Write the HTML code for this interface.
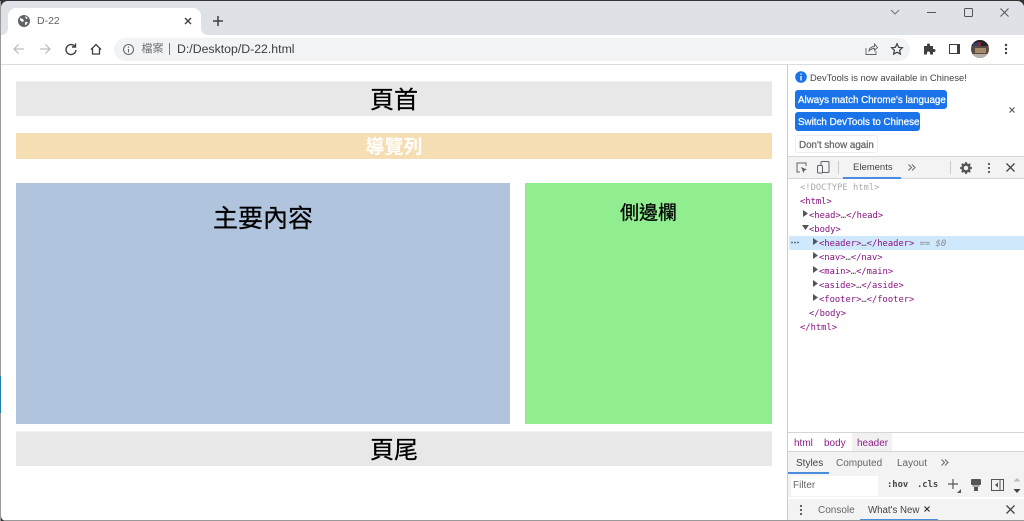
<!DOCTYPE html>
<html><head><meta charset="utf-8"><style>
html,body{margin:0;padding:0;background:#fff;overflow:hidden}
#r{position:relative;width:1024px;height:521px;overflow:hidden;background:#333;font-family:"Liberation Sans","Noto Sans CJK TC",sans-serif}
.a{position:absolute}
.t{position:absolute;white-space:nowrap}
.c{position:absolute;text-align:center;font-family:"Noto Sans CJK TC","WenQuanYi Zen Hei",sans-serif;white-space:nowrap;-webkit-text-stroke:.25px currentColor}
.m{position:absolute;white-space:nowrap;font-family:"DejaVu Sans Mono","Liberation Mono",monospace;font-size:8.8px;line-height:14px;color:#881280}
.b{-webkit-text-stroke:.25px currentColor}
svg{position:absolute;overflow:visible}
</style></head><body><div id="r">
<div class="a" style="left:1px;top:1px;width:1023px;height:520px;background:#fff;border-radius:7px 7px 0 5px"></div>
<div class="a" style="left:1px;top:1px;width:1023px;height:34px;background:#dee1e6;border-radius:7px 7px 0 0"></div>
<div class="a" style="left:8px;top:8px;width:193px;height:27px;background:#fff;border-radius:8px 8px 0 0"></div>
<svg style="left:1px;top:28px" width="7" height="7"><path d="M0 7h7V0C7 4 4 7 0 7z" fill="#fff"/></svg>
<svg style="left:201px;top:28px" width="7" height="7"><path d="M0 0v7h7C3 7 0 4 0 0z" fill="#fff"/></svg>
<svg style="left:18px;top:15px" width="12" height="12" viewBox="0 0 12 12"><circle cx="6" cy="6" r="6" fill="#5f6368"/><path d="M2 3l3 1 1 2-2 1-2-2zM7 1l3 2-2 1zM7 7l3 0-2 3-1 0z" fill="#fff"/></svg>
<div class="t" style="left:37px;top:15px;font-size:10.5px;line-height:13px;color:#5f6368">D-22</div>
<svg style="left:184px;top:17px" width="8" height="8"><path d="M1 1l6 6M7 1l-6 6" stroke="#3c4043" stroke-width="1.4" fill="none"/></svg>
<svg style="left:213px;top:16px" width="10" height="10"><path d="M5 0v10M0 5h10" stroke="#3c4043" stroke-width="1.5" fill="none"/></svg>
<svg style="left:890px;top:9px" width="10" height="6"><path d="M1 1l4 4 4-4" stroke="#70757a" fill="none"/></svg>
<div class="a" style="left:927px;top:12px;width:9px;height:1px;background:#555"></div>
<div class="a" style="left:964px;top:8px;width:7px;height:7px;border:1px solid #555;border-radius:1.5px"></div>
<svg style="left:1000px;top:8px" width="9" height="9"><path d="M.5.5l8 8M8.500.5l-8 8" stroke="#555" fill="none"/></svg>

<div class="a" style="left:1px;top:35px;width:1023px;height:29px;background:#fff;border-bottom:1px solid #dadce0"></div>
<svg style="left:13px;top:43px" width="12" height="12"><path d="M11 6H1M5.500 1.500L1 6l4.500 4.500" stroke="#bcc0c4" stroke-width="1.300" fill="none"/></svg>
<svg style="left:39px;top:43px" width="12" height="12"><path d="M1 6h10M6.500 1.500L11 6l-4.500 4.500" stroke="#bcc0c4" stroke-width="1.300" fill="none"/></svg>
<svg style="left:65px;top:43px" width="12" height="12"><path d="M10 3.500A5 5 0 1 0 11 7M10.500 .5v3.500H7" stroke="#3c4043" stroke-width="1.400" fill="none"/></svg>
<svg style="left:90px;top:43px" width="12" height="12"><path d="M1 6.500L6 1.500l5 5M2.500 5.500V11h7V5.500" stroke="#3c4043" stroke-width="1.300" fill="none"/></svg>
<div class="a" style="left:114px;top:38px;width:796px;height:23px;background:#f1f3f4;border-radius:12px"></div>
<svg style="left:123px;top:44px" width="11" height="11"><circle cx="5.500" cy="5.500" r="5" stroke="#5f6368" fill="none"/><path d="M5.500 2.500v1.200M5.500 5v3.500" stroke="#5f6368"/></svg>
<div class="t" style="left:141.500px;top:42px;font-size:11px;line-height:14px;color:#6c7074">檔案</div>
<div class="a" style="left:169px;top:43px;width:1px;height:12px;background:#777"></div>
<div class="t" style="left:177px;top:42px;font-size:12.300px;line-height:15px;color:#3c4043">D:/Desktop/D-22.html</div>
<svg style="left:865px;top:43px" width="13" height="12"><path d="M1 5v6.500h10V8M4 8c0-3 3-4.500 5.500-4.500V1l3 3.500-3 3V5.500C7 5.500 5.500 6 4 8z" stroke="#5f6368" fill="none" stroke-width=".9"/></svg>
<svg style="left:891px;top:43px" width="12" height="12"><path d="M6 .8l1.600 3.500 3.800.4-2.800 2.600.8 3.800L6 9.200l-3.400 1.900.8-3.800L.6 4.700l3.800-.4z" stroke="#3c4043" stroke-width="1.200" fill="none"/></svg>
<svg style="left:923px;top:43px" width="12" height="12"><path d="M1 3h3V2a1.500 1.500 0 0 1 3 0v1h3v3h1a1.500 1.500 0 0 1 0 3h-1v2.500H7V10a1.500 1.500 0 0 0-3 0v1.500H1z" fill="#3c4043"/></svg>
<div class="a" style="left:949px;top:44px;width:7px;height:8px;border:1px solid #3c4043;border-right:3px solid #3c4043"></div>
<div class="a" style="left:971px;top:40px;width:18px;height:18px;border-radius:50%;overflow:hidden;background:#5a4a42"><div class="a" style="left:0;top:0;width:18px;height:6px;background:#26222c"></div><div class="a" style="left:2px;top:3px;width:4px;height:3px;background:#2e4470"></div><div class="a" style="left:6px;top:2px;width:4px;height:4px;background:#7a2c38"></div><div class="a" style="left:4px;top:8px;width:11px;height:5px;background:#a58a6c"></div><div class="a" style="left:0;top:14px;width:18px;height:4px;background:#b8b0a8"></div></div>
<svg style="left:1004px;top:43px" width="4" height="12"><circle cx="2" cy="2" r="1.200" fill="#3c4043"/><circle cx="2" cy="6" r="1.200" fill="#3c4043"/><circle cx="2" cy="10" r="1.200" fill="#3c4043"/></svg>

<div class="a" style="left:16px;top:81px;width:756px;height:35px;background:#e8e8e8;border-top:1px solid #f1f1f1;box-sizing:border-box"></div>
<div class="c" style="left:16px;top:81px;width:756px;font-size:24px;line-height:34px;color:#000">頁首</div>
<div class="a" style="left:16px;top:133px;width:756px;height:26px;background:#f5deb3"></div>
<div class="c" style="left:16px;top:133px;width:756px;font-size:19px;font-weight:700;line-height:26px;color:#fff;-webkit-text-stroke:0">導覽列</div>
<div class="a" style="left:16px;top:183px;width:494px;height:241px;background:#b0c4de"></div>
<div class="c" style="left:16px;top:199px;width:494px;font-size:25px;line-height:36px;color:#000">主要內容</div>
<div class="a" style="left:525px;top:183px;width:247px;height:241px;background:#90ee90"></div>
<div class="c" style="left:525px;top:198px;width:247px;font-size:19px;line-height:28px;color:#000">側邊欄</div>
<div class="a" style="left:16px;top:431px;width:756px;height:35px;background:#e8e8e8;border-top:1px solid #f1f1f1;box-sizing:border-box"></div>
<div class="c" style="left:16px;top:431px;width:756px;font-size:24px;line-height:34px;color:#000">頁尾</div>

<div class="a" style="left:787px;top:65px;width:1px;height:456px;background:#cbcdd1"></div>
<svg style="left:795px;top:71px" width="12" height="12"><circle cx="6" cy="6" r="5.800" fill="#1a73e8"/><path d="M6 2.500v1.300M6 5v4.500" stroke="#fff" stroke-width="1.300"/></svg>
<div class="t" style="left:810px;top:71px;font-size:9.400px;line-height:13px;color:#444">DevTools is now available in Chinese!</div>
<div class="a" style="left:795px;top:90px;width:152px;height:19px;background:#1a73e8;border-radius:3px"></div>
<div class="t b" style="left:798px;top:94px;font-size:9.800px;line-height:13px;color:#fff">Always match Chrome's language</div>
<div class="a" style="left:795px;top:112px;width:125px;height:19px;background:#1a73e8;border-radius:3px"></div>
<div class="t b" style="left:798px;top:116px;font-size:9.800px;line-height:13px;color:#fff">Switch DevTools to Chinese</div>
<div class="a" style="left:795px;top:135px;width:81px;height:16px;border:1px solid #eee;border-radius:3px"></div>
<div class="t b" style="left:799px;top:139px;font-size:9.800px;line-height:13px;color:#666">Don't show again</div>
<svg style="left:1009px;top:107px" width="6" height="6"><path d="M.5.500l5 5M5.500.500l-5 5" stroke="#555" stroke-width="1.100" fill="none"/></svg>

<div class="a" style="left:788px;top:156px;width:236px;height:23px;background:#f3f3f3;border-top:1px solid #d5d5d5;border-bottom:1px solid #d5d5d5;box-sizing:border-box"></div>
<svg style="left:796px;top:162px" width="12" height="12"><path d="M4 10H1V1h9v3" stroke="#5f6368" fill="none"/><path d="M5 5l6 2.500-2.500 1L7.500 11z" fill="#5f6368"/></svg>
<svg style="left:817px;top:161px" width="13" height="13"><rect x="4" y=".5" width="8" height="11" rx="1" stroke="#5f6368" fill="none"/><rect x=".5" y="4.500" width="5" height="7.500" rx="1" stroke="#5f6368" fill="#f3f3f3"/></svg>
<div class="a" style="left:838px;top:161px;width:1px;height:13px;background:#ccc"></div>
<div class="t" style="left:853px;top:161px;font-size:9.500px;line-height:13px;color:#444">Elements</div>
<div class="a" style="left:843px;top:177px;width:58px;height:2px;background:#4a8ce0"></div>
<svg style="left:908px;top:164px" width="8" height="7"><path d="M.5.500l3 3-3 3M4 .500l3 3-3 3" stroke="#666" fill="none"/></svg>
<div class="a" style="left:950px;top:161px;width:1px;height:13px;background:#ccc"></div>
<svg style="left:960px;top:162px" width="12" height="12"><circle cx="6" cy="6" r="3.500" stroke="#555" stroke-width="2.500" fill="none"/><path d="M6 0v2M6 10v2M0 6h2M10 6h2M1.800 1.800l1.400 1.400M8.800 8.800l1.400 1.400M10.200 1.800L8.800 3.200M3.200 8.800l-1.400 1.400" stroke="#555" stroke-width="1.800"/></svg>
<svg style="left:987px;top:162px" width="4" height="12"><circle cx="2" cy="2" r="1.100" fill="#555"/><circle cx="2" cy="6" r="1.100" fill="#555"/><circle cx="2" cy="10" r="1.100" fill="#555"/></svg>
<svg style="left:1006px;top:163px" width="9" height="9"><path d="M.5.500l8 8M8.500.500l-8 8" stroke="#444" stroke-width="1.300" fill="none"/></svg>

<div class="a" style="left:789px;top:236px;width:235px;height:14px;background:#cfe8fc"></div>
<div class="m" style="left:800px;top:181px;color:#aaa">&lt;!DOCTYPE html&gt;</div>
<div class="m" style="left:800px;top:195px">&lt;html&gt;</div>
<div class="m" style="left:809px;top:209px">&lt;head&gt;<span style="color:#555">…</span>&lt;/head&gt;</div>
<div class="m" style="left:809px;top:223px">&lt;body&gt;</div>
<div class="m" style="left:819px;top:237px">&lt;header&gt;<span style="color:#555">…</span>&lt;/header&gt; <span style="color:#888;font-style:italic">== $0</span></div>
<div class="m" style="left:819px;top:251px">&lt;nav&gt;<span style="color:#555">…</span>&lt;/nav&gt;</div>
<div class="m" style="left:819px;top:265px">&lt;main&gt;<span style="color:#555">…</span>&lt;/main&gt;</div>
<div class="m" style="left:819px;top:279px">&lt;aside&gt;<span style="color:#555">…</span>&lt;/aside&gt;</div>
<div class="m" style="left:819px;top:293px">&lt;footer&gt;<span style="color:#555">…</span>&lt;/footer&gt;</div>
<div class="m" style="left:809px;top:307px">&lt;/body&gt;</div>
<div class="m" style="left:800px;top:321px">&lt;/html&gt;</div>
<svg style="left:803px;top:210px" width="5" height="7"><path d="M0 0l5 3.500L0 7z" fill="#555"/></svg>
<svg style="left:802px;top:225px" width="7" height="5"><path d="M0 0h7L3.500 5z" fill="#555"/></svg>
<svg style="left:813px;top:238px" width="5" height="7"><path d="M0 0l5 3.500L0 7z" fill="#555"/></svg>
<svg style="left:813px;top:252px" width="5" height="7"><path d="M0 0l5 3.500L0 7z" fill="#555"/></svg>
<svg style="left:813px;top:266px" width="5" height="7"><path d="M0 0l5 3.500L0 7z" fill="#555"/></svg>
<svg style="left:813px;top:280px" width="5" height="7"><path d="M0 0l5 3.500L0 7z" fill="#555"/></svg>
<svg style="left:813px;top:294px" width="5" height="7"><path d="M0 0l5 3.500L0 7z" fill="#555"/></svg>
<svg style="left:791px;top:241px" width="9" height="3"><circle cx="1" cy="1.500" r=".9" fill="#555"/><circle cx="4" cy="1.500" r=".9" fill="#555"/><circle cx="7" cy="1.500" r=".9" fill="#555"/></svg>

<div class="a" style="left:788px;top:432px;width:236px;height:1px;background:#d5d5d5"></div>
<div class="a" style="left:852px;top:433px;width:40px;height:18px;background:#f1f1f1"></div>
<div class="t" style="left:794px;top:437px;font-size:10px;line-height:13px;color:#92208c">html</div>
<div class="t" style="left:824px;top:437px;font-size:10px;line-height:13px;color:#92208c">body</div>
<div class="t" style="left:857px;top:437px;font-size:10px;line-height:13px;color:#92208c">header</div>
<div class="a" style="left:788px;top:451px;width:236px;height:70px;background:#f3f3f3;border-top:1px solid #d5d5d5;box-sizing:border-box"></div>
<div class="t" style="left:796px;top:457px;font-size:10px;line-height:13px;color:#444">Styles</div>
<div class="t" style="left:836px;top:457px;font-size:10px;line-height:13px;color:#666">Computed</div>
<div class="t" style="left:897px;top:457px;font-size:10px;line-height:13px;color:#666">Layout</div>
<svg style="left:941px;top:459px" width="8" height="7"><path d="M.5.500l3 3-3 3M4 .500l3 3-3 3" stroke="#666" fill="none"/></svg>
<div class="a" style="left:788px;top:472px;width:41px;height:2px;background:#4a8ce0"></div>
<div class="a" style="left:791px;top:476px;width:87px;height:20px;background:#fff"></div>
<div class="a" style="left:788px;top:497px;width:236px;height:2px;background:#fff"></div>
<div class="t" style="left:793px;top:479px;font-size:10px;line-height:13px;color:#666">Filter</div>
<div class="t" style="left:887px;top:479px;font-family:'DejaVu Sans Mono',monospace;font-size:8.800px;font-weight:700;line-height:13px;color:#444">:hov</div>
<div class="t" style="left:917px;top:479px;font-family:'DejaVu Sans Mono',monospace;font-size:8.800px;font-weight:700;line-height:13px;color:#444">.cls</div>
<svg style="left:948px;top:479px" width="14" height="14"><path d="M5 0v10M0 5h10" stroke="#555" stroke-width="1.200"/><path d="M13 10v4h-4z" fill="#555"/></svg>
<svg style="left:970px;top:479px" width="12" height="12"><rect x="1" y="0" width="10" height="6" rx="1" fill="#555"/><rect x="2.500" y="6" width="7" height="2" fill="#aaa"/><rect x="4" y="8" width="4" height="4" fill="#555"/></svg>
<svg style="left:991px;top:479px" width="13" height="12"><rect x=".5" y=".5" width="12" height="11" stroke="#555" fill="none"/><path d="M9 1v10" stroke="#555"/><path d="M7 3.500v5L4 6z" fill="#555"/></svg>
<svg style="left:1013px;top:478px" width="8" height="16"><path d="M4 0l3.500 3.500h-7z" fill="#bbb"/><path d="M.5 11h7L4 15z" fill="#444"/></svg>
<svg style="left:799px;top:504px" width="4" height="12"><circle cx="2" cy="2" r="1.100" fill="#555"/><circle cx="2" cy="6" r="1.100" fill="#555"/><circle cx="2" cy="10" r="1.100" fill="#555"/></svg>
<div class="t" style="left:818px;top:504px;font-size:10px;line-height:13px;color:#666">Console</div>
<div class="t" style="left:868px;top:504px;font-size:9.700px;line-height:13px;color:#444">What's New</div>
<svg style="left:924px;top:506px" width="6" height="6"><path d="M.5.500l5 5M5.500.500l-5 5" stroke="#333" stroke-width="1.200" fill="none"/></svg>
<svg style="left:1006px;top:505px" width="9" height="9"><path d="M.5.500l8 8M8.500.500l-8 8" stroke="#444" stroke-width="1.300" fill="none"/></svg>
<div class="a" style="left:860px;top:519px;width:78px;height:2px;background:#4a8ce0"></div>
<div class="a" style="left:0;top:1px;width:1px;height:520px;background:#999"></div>
<div class="a" style="left:4px;top:520px;width:1020px;height:1px;background:#999"></div>
<div class="a" style="left:0;top:376px;width:1px;height:37px;background:#1f7fa8"></div>
</div></body></html>
